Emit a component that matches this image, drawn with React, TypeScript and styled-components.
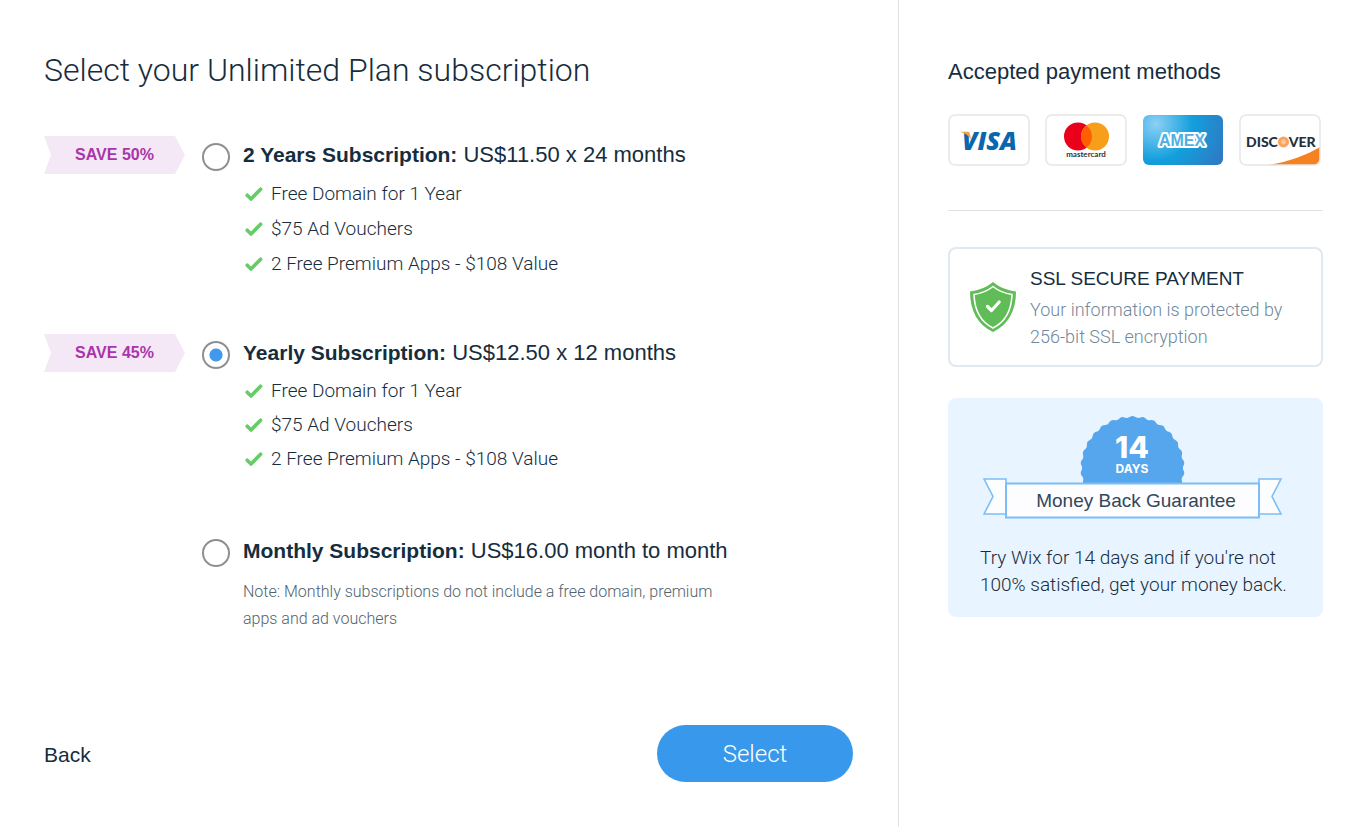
import React, { useState } from "react";
import styled, { createGlobalStyle } from "styled-components";

const sans = `"Liberation Sans", Arial, sans-serif`;
const light = `Roboto, "Liberation Sans", sans-serif`;

const GlobalStyle = createGlobalStyle`
  * { box-sizing: border-box; }
  body {
    margin: 0;
    background: #fff;
    color: #162d3d;
    font-family: ${sans};
  }
`;

const Page = styled.form`
  display: flex;
  min-height: 100vh;
`;

const Main = styled.main`
  flex: 1;
  display: flex;
  flex-direction: column;
  padding: 48px 45px 45px 44px;
`;

const Title = styled.h1`
  margin: 0 0 44px;
  font-family: ${light};
  font-weight: 300;
  font-size: 32px;
  line-height: 44px;
`;

const Options = styled.div`
  display: grid;
  grid-auto-rows: 1fr;
  row-gap: 53px;
`;

const Option = styled.section`
  display: grid;
  grid-template-columns: 158px 41px 1fr;
  grid-template-rows: 38px auto;
  align-items: center;
  align-content: start;
`;

const Ribbon = styled.strong`
  grid-column: 1;
  width: 141px;
  background: #f4e8f7;
  color: #aa35a8;
  clip-path: polygon(0 0, 131px 0, 100% 50%, 131px 100%, 0 100%, 7px 50%);
  font-size: 16px;
  line-height: 38px;
  text-align: center;
`;

const Radio = styled.input`
  grid-column: 2;
  appearance: none;
  width: 28px;
  height: 28px;
  margin: 3px 0 0;
  border: 2px solid #8f8f8f;
  border-radius: 50%;
  background: #fff;
  &:checked {
    background: radial-gradient(circle, #4198ec 6px, #fff 7px);
  }
`;

const OptionName = styled.label`
  grid-column: 3;
  font-size: 22px;
  line-height: 38px;
  b { font-size: 21px; }
`;

const Benefits = styled.ul<{ $row: number }>`
  grid-column: 3;
  list-style: none;
  margin: 2px 0 0;
  padding: 0;
  line-height: ${(p) => p.$row}px;
`;

const Benefit = styled.li`
  display: flex;
  align-items: center;
  gap: 8px;
  padding-left: 2px;
  font-family: ${light};
  font-weight: 300;
  font-size: 19px;
`;

const Note = styled.p`
  grid-column: 3;
  max-width: 490px;
  margin: 8px 0 0;
  color: #4f6371;
  font-family: ${light};
  font-size: 16px;
  font-weight: 300;
  line-height: 27px;
`;

const Footer = styled.footer`
  display: flex;
  align-items: baseline;
  justify-content: space-between;
  margin-top: auto;
`;

const BackButton = styled.button`
  border: 0;
  padding: 0;
  background: none;
  color: inherit;
  font-family: inherit;
  font-size: 21px;
  line-height: 27px;
`;

const SelectButton = styled.button`
  width: 196px;
  height: 57px;
  border: 0;
  border-radius: 29px;
  background: #3899ec;
  color: #fff;
  font-family: ${light};
  font-weight: 300;
  font-size: 24px;
`;

const Aside = styled.aside`
  flex: 0 0 470px;
  padding: 58px 45px 0 49px;
  border-left: 1px solid #dfe3e6;
`;

const AsideTitle = styled.h2`
  margin: 0;
  font-size: 22px;
  font-weight: 400;
  line-height: 28px;
`;

const Cards = styled.div`
  display: flex;
  gap: 15px;
  padding: 28px 0 44px;
  border-bottom: 1px solid #dfe3e6;
  svg { display: block; }
`;

const SecureBox = styled.section`
  display: flex;
  align-items: center;
  gap: 14px;
  margin-top: 36px;
  padding: 15px 20px;
  border: 2px solid #e0e8f0;
  border-radius: 8px;
  svg { flex: none; }
`;

const SecureTitle = styled.h3`
  margin: 0 0 2px;
  font-size: 19px;
  font-weight: 400;
  line-height: 30px;
`;

const SecureText = styled.p`
  margin: 0;
  color: #6f889b;
  font-family: ${light};
  font-weight: 300;
  font-size: 18px;
  line-height: 27px;
`;

const GuaranteeBox = styled.section`
  margin-top: 31px;
  padding: 18px 24px 19px 32px;
  border-radius: 8px;
  background: #e8f4ff;
  svg { display: block; margin: 0 3px 25px; }
`;

const GuaranteeText = styled.p`
  margin: 0;
  font-family: ${light};
  font-weight: 300;
  font-size: 19px;
  line-height: 27px;
`;

const Check = () => (
  <svg width="18" height="16" viewBox="0 0 18 16" aria-hidden="true">
    <path d="M2.2 9.2 6 13 15.6 3.2" fill="none" stroke="#66cc66" strokeWidth="3.6" strokeLinecap="round" strokeLinejoin="round" />
  </svg>
);

const CardFrame = ({ name, fill = "#fff", children }: { name: string; fill?: string; children: React.ReactNode }) => (
  <svg width="82" height="52" viewBox="0 0 82 52" role="img" aria-label={name}>
    <rect x="1" y="1" width="80" height="50" rx="6" fill={fill} />
    {children}
    {fill === "#fff" && <rect x="1" y="1" width="80" height="50" rx="6" fill="none" stroke="#e6e6e6" strokeWidth="1.5" />}
  </svg>
);

const Visa = () => (
  <CardFrame name="Visa">
    <text x="14" y="36" fill="#0a66ae" fontFamily="Open Sans" fontWeight="800" fontStyle="italic" fontSize="25">VISA</text>
    <path d="M12 17.8h7.2c1.6 0 2.3.6 2.7 2l1.3 5.6C21 22 17 19 12 17.8z" fill="#f7a140" />
  </CardFrame>
);

const Mastercard = () => (
  <CardFrame name="Mastercard">
    <circle cx="33" cy="22.5" r="14" fill="#eb001b" />
    <circle cx="50" cy="22.5" r="14" fill="#f79e1b" />
    <path d="M41.5 11.400a14 14 0 0 1 0 22.200a14 14 0 0 1 0-22.200z" fill="#ff5f00" />
    <text x="41" y="43" fill="#333" textAnchor="middle" fontFamily="Lato" fontWeight="700" fontSize="8">mastercard</text>
  </CardFrame>
);

const Amex = () => (
  <CardFrame name="American Express" fill="url(#amex)">
    <defs>
      <radialGradient id="amex" gradientUnits="userSpaceOnUse" cx="14" cy="10" r="76">
        <stop offset="0" stopColor="#8dd0f5" />
        <stop offset="0.48" stopColor="#129fdc" />
        <stop offset="1" stopColor="#3078c2" />
      </radialGradient>
    </defs>
    <text x="40" y="32" fill="#4fb0e4" stroke="#fff" strokeWidth="4" strokeLinejoin="round" paintOrder="stroke" textAnchor="middle" fontFamily="Liberation Sans" fontWeight="700" fontSize="16">AMEX</text>
  </CardFrame>
);

const Discover = () => (
  <CardFrame name="Discover">
    <path d="M27 51C46 49 66 42 81 33v12a6 6 0 0 1-6 6z" fill="#f58220" />
    <text x="7" y="33" fill="#25303c" fontFamily="Lato" fontWeight="900" fontSize="14">
      DISC<tspan fill="#f9a45c">O</tspan>VER
    </text>
    <circle cx="44.500" cy="28" r="5.400" fill="#f9a45c" />
    <circle cx="44.500" cy="28" r="2.400" fill="#fcc797" />
  </CardFrame>
);

const Shield = () => (
  <svg width="46" height="50" viewBox="0 0 46 50" aria-hidden="true">
    <path d="M23 0c6 5 14 8.500 23 9.500C46 29 38 43 23 50 8 43 0 29 0 9.500 9 8.500 17 5 23 0z" fill="#60bc57" />
    <path d="M23 4.500c5 4 12 7 19 8C41.500 28 35 40 23 46 11 40 4.500 28 4 12.500c7-1 14-4 19-8z" fill="#60bc57" stroke="#fff" strokeWidth="1.600" />
    <path d="M17.500 24.500l4 4 7.700-8.500" fill="none" stroke="#fff" strokeWidth="3.200" strokeLinecap="round" strokeLinejoin="round" />
  </svg>
);

const sealEdge = (() => {
  const teeth = 30;
  let d = "";
  for (let i = 0; i <= 180; i++) {
    const a = (i / 180) * Math.PI * 2;
    const r = 51.2 + 0.9 * Math.cos(a * teeth);
    d += `${i ? "L" : "M"}${(149.5 + r * Math.sin(a)).toFixed(2)} ${(52 - r * Math.cos(a)).toFixed(2)}`;
  }
  return d + "z";
})();

const Seal = () => (
  <svg width="299" height="103" viewBox="0 0 299 103" role="img" aria-label="14 days money back guarantee">
    <path d={sealEdge} fill="#56a6ee" />
    <rect x="0" y="67" width="299" height="36" fill="#e8f4ff" />
    <path d="M1 63h22v35H1l9-17.500z M298 63h-22v35h22l-9-17.500z" fill="#fbfdff" stroke="#7dbdf5" strokeWidth="1.600" />
    <rect x="23" y="67.500" width="253" height="34" fill="#fdfdff" stroke="#7dbdf5" strokeWidth="2" />
    <text fill="#fff" textAnchor="middle" fontFamily="Inter">
      <tspan x="149" y="42" fontWeight="800" fontSize="30">14</tspan>
      <tspan x="149" y="57" fontWeight="700" fontSize="12">DAYS</tspan>
    </text>
    <text x="153" y="91" fill="#33475a" textAnchor="middle" fontFamily="Liberation Sans" fontSize="19">Money Back Guarantee</text>
  </svg>
);

const perks = ["Free Domain for 1 Year", "$75 Ad Vouchers", "2 Free Premium Apps - $108 Value"];

const plans = [
  { id: "two-years", name: "2 Years Subscription:", price: "US$11.50 x 24 months", save: "SAVE 50%", perks, row: 35 },
  { id: "yearly", name: "Yearly Subscription:", price: "US$12.50 x 12 months", save: "SAVE 45%", perks, row: 34 },
  {
    id: "monthly",
    name: "Monthly Subscription:",
    price: "US$16.00 month to month",
    note: "Note: Monthly subscriptions do not include a free domain, premium apps and ad vouchers",
  },
];

export default function App() {
  const [selected, setSelected] = useState("yearly");
  return (
    <Page onSubmit={(e) => e.preventDefault()}>
      <GlobalStyle />
      <Main>
        <Title>Select your Unlimited Plan subscription</Title>
        <Options>
          {plans.map((plan) => (
            <Option key={plan.id}>
              {plan.save && <Ribbon>{plan.save}</Ribbon>}
              <Radio type="radio" name="plan" id={plan.id} checked={selected === plan.id} onChange={() => setSelected(plan.id)} />
              <OptionName htmlFor={plan.id}>
                <b>{plan.name}</b> {plan.price}
              </OptionName>
              {plan.perks && (
                <Benefits $row={plan.row}>
                  {plan.perks.map((perk) => (
                    <Benefit key={perk}>
                      <Check />
                      {perk}
                    </Benefit>
                  ))}
                </Benefits>
              )}
              {plan.note && <Note>{plan.note}</Note>}
            </Option>
          ))}
        </Options>
        <Footer>
          <BackButton type="button">Back</BackButton>
          <SelectButton type="submit">Select</SelectButton>
        </Footer>
      </Main>
      <Aside>
        <AsideTitle>Accepted payment methods</AsideTitle>
        <Cards>
          <Visa />
          <Mastercard />
          <Amex />
          <Discover />
        </Cards>
        <SecureBox>
          <Shield />
          <div>
            <SecureTitle>SSL SECURE PAYMENT</SecureTitle>
            <SecureText>Your information is protected by 256-bit SSL encryption</SecureText>
          </div>
        </SecureBox>
        <GuaranteeBox>
          <Seal />
          <GuaranteeText>Try Wix for 14 days and if you're not 100% satisfied, get your money back.</GuaranteeText>
        </GuaranteeBox>
      </Aside>
    </Page>
  );
}
